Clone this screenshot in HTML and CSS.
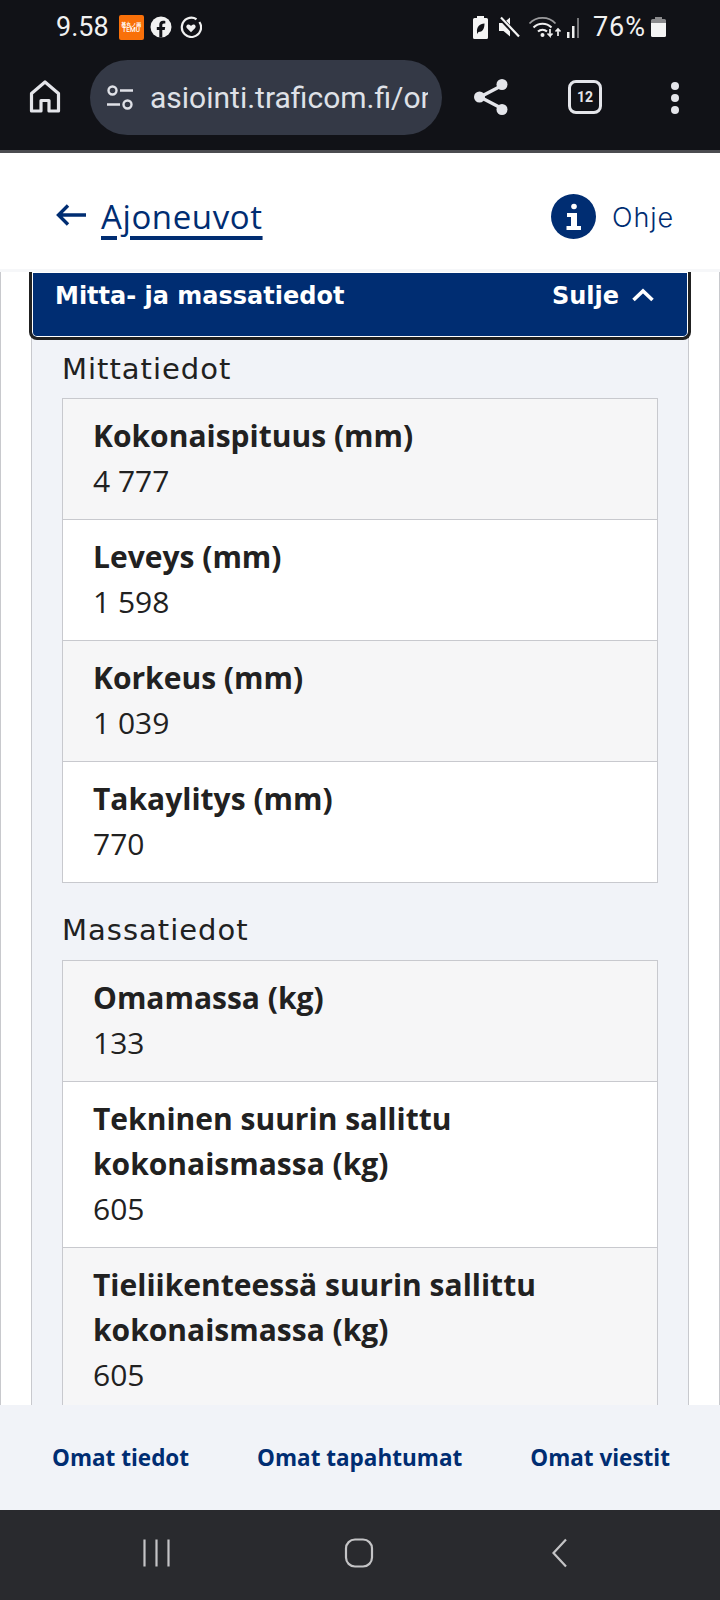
FILE: index.html
```html
<!DOCTYPE html>
<html lang="fi">
<head>
<meta charset="utf-8">
<title>Ajoneuvot</title>
<link rel="stylesheet" href="styles.css">
</head>
<body>
<div class="chrome">
  <div class="status">
    <div class="status-left">
      <span class="clock">9.58</span>
      <span class="temu"><span class="temu-top">基丸ノ画</span><span class="temu-name">TEMU</span></span>
      <svg class="ic21" viewBox="0 0 22 22"><circle cx="11" cy="11" r="10.5" fill="#f1f1f1"/><path d="M9.3 21.5v-7.6H6.8v-3h2.5V8.7c0-2.6 1.5-4 3.8-4 .8 0 1.6.1 2.2.2v2.6h-1.4c-1.2 0-1.6.8-1.6 1.6v1.8h2.9l-.5 3h-2.4v7.6z" fill="#111217"/></svg>
      <svg class="ic21" viewBox="0 0 22 22"><path d="M16.5 3.2A9.6 9.6 0 1 0 19.4 6" fill="none" stroke="#f1f1f1" stroke-width="2.2"/><path d="M11 16.2l-4-3.9c-2-2.2.9-5 3-3.2l1 .9 1-.9c2.100-1.800 5 1 3 3.200z" fill="#f1f1f1"/></svg>
    </div>
    <div class="status-right">
      <svg class="sr-batt" viewBox="0 0 15 23"><path d="M4 0h7v2h2.500q1.500 0 1.500 1.500v18q0 1.500-1.500 1.500h-12q-1.500 0-1.500-1.500v-18q0-1.500 1.500-1.500H4z" fill="#f4f4f4"/><path d="M4 16c-.5-5 2.500-8 7.500-8.500 0 5-2 8.500-6 8.500l-1.500 2z" fill="#111217"/></svg>
      <svg class="sr-mute" viewBox="0 0 22 22"><path d="M1 7h4.500L12 1.500v19L5.500 15H1z" fill="#f4f4f4"/><path d="M2 1.500l18 19" stroke="#111217" stroke-width="4.500"/><path d="M3 1.500l18 19" stroke="#f4f4f4" stroke-width="2.200"/></svg>
      <svg class="sr-wifi" viewBox="0 0 54 24"><path d="M1.500 8.500c7-7.500 19-7.500 26 0" fill="none" stroke="#9b9b9d" stroke-width="1.800"/><path d="M5.500 12.500c5-5 13-5 18 0M10 16.500c2.500-2.500 6.500-2.500 9 0" fill="none" stroke="#f0f0f0" stroke-width="2"/><circle cx="14.500" cy="20" r="2" fill="#f0f0f0"/><path d="M22 14v7l-2.500-2.500M22 21l2.500-2.500M30 21v-7M27.500 16.500l2.500-2.500 2.500 2.500" fill="none" stroke="#f0f0f0" stroke-width="1.700"/><rect x="39" y="17" width="2.500" height="6" fill="#f0f0f0"/><rect x="44" y="11" width="2.500" height="12" fill="#f0f0f0"/><rect x="49" y="3" width="2" height="20" fill="#77777a"/></svg>
      <span class="pct">76%</span>
      <svg class="sr-b2" viewBox="0 0 15 20"><path d="M4 0h7v2h2.500q1.500 0 1.500 1.500V7H0V3.500Q0 2 1.500 2H4z" fill="#8b8b8d"/><path d="M0 6h15v12.500q0 1.500-1.500 1.500h-12Q0 20 0 18.500z" fill="#f4f4f4"/></svg>
    </div>
  </div>
  <div class="toolbar">
    <svg class="home" viewBox="0 0 32 34"><path d="M16 3L2.500 14.500V32h9.500V21.500h8V32h9.500V14.500z" fill="none" stroke="#e4e5ea" stroke-width="3.200" stroke-linejoin="round"/></svg>
    <div class="url">
      <svg class="tune" viewBox="0 0 28 26"><circle cx="6.500" cy="5.500" r="4" fill="none" stroke="#dfe1e7" stroke-width="2.400"/><path d="M14 5.500h13M1 19.500h13" stroke="#dfe1e7" stroke-width="2.400"/><circle cx="21.500" cy="19.500" r="4" fill="none" stroke="#dfe1e7" stroke-width="2.400"/></svg>
      <span class="url-text">asiointi.traficom.fi/omat</span>
    </div>
    <svg class="share" viewBox="0 0 36 38"><path d="M29 7.500L7 19l22 11.500" fill="none" stroke="#e4e5ea" stroke-width="3.400"/><circle cx="29" cy="6.500" r="5.500" fill="#e4e5ea"/><circle cx="6.500" cy="19" r="5.500" fill="#e4e5ea"/><circle cx="29" cy="31.500" r="5.500" fill="#e4e5ea"/></svg>
    <span class="tabs">12</span>
    <span class="dots"><i></i><i></i><i></i></span>
  </div>
</div>
<header class="top">
  <a class="back" href="#">
    <svg class="arrow" viewBox="0 0 30 24"><path d="M12 2.500L2.500 12l9.500 9.500M3 12h27" fill="none" stroke="#002d72" stroke-width="3.400"/></svg>
    <span class="back-label">Ajoneuvot</span>
  </a>
  <a class="help" href="#">
    <svg class="info" viewBox="0 0 45 45"><circle cx="22.500" cy="22.500" r="22.500" fill="#002d72"/><circle cx="23" cy="12.500" r="2.800" fill="#fff"/><path d="M16 19h10v13h4v4H15.500v-4H20v-9h-4z" fill="#fff"/></svg>
    <span>Ohje</span>
  </a>
</header>
<main class="scroll">
  <div class="panel">
    <div class="accordion">
      <span>Mitta- ja massatiedot</span>
      <span class="close">Sulje
        <svg class="chev" viewBox="0 0 24 14"><path d="M2.500 12L12 3l9.500 9" fill="none" stroke="#fff" stroke-width="3.600"/></svg>
      </span>
    </div>
    <div class="panel-body">
      <h2 class="group first">Mittatiedot</h2>
      <dl class="table">
        <div class="row"><dt>Kokonaispituus (mm)</dt><dd>4 777</dd></div>
        <div class="row"><dt>Leveys (mm)</dt><dd>1 598</dd></div>
        <div class="row"><dt>Korkeus (mm)</dt><dd>1 039</dd></div>
        <div class="row"><dt>Takaylitys (mm)</dt><dd>770</dd></div>
      </dl>
      <h2 class="group">Massatiedot</h2>
      <dl class="table">
        <div class="row"><dt>Omamassa (kg)</dt><dd>133</dd></div>
        <div class="row"><dt>Tekninen suurin sallittu kokonaismassa (kg)</dt><dd>605</dd></div>
        <div class="row"><dt>Tieliikenteessä suurin sallittu kokonaismassa (kg)</dt><dd>605</dd></div>
      </dl>
    </div>
  </div>
</main>
<footer class="foot">
  <a href="#">Omat tiedot</a>
  <a href="#">Omat tapahtumat</a>
  <a href="#">Omat viestit</a>
</footer>
<nav class="sysnav">
  <svg class="nav-ic" viewBox="0 0 30 30"><path d="M2.500 1.500v27M14.500 1.500v27M26.500 1.500v27" stroke="#c4c4c6" stroke-width="2.200" fill="none"/></svg>
  <svg class="nav-ic" viewBox="0 0 30 30"><rect x="2" y="1.500" width="26" height="27" rx="9" fill="none" stroke="#c4c4c6" stroke-width="2.200"/></svg>
  <svg class="nav-ic" viewBox="0 0 30 30"><path d="M20 1.500L7.500 15 20 28.500" fill="none" stroke="#c4c4c6" stroke-width="2.200"/></svg>
</nav>
</body>
</html>
```
FILE: styles.css
```css
* { box-sizing: border-box; }
html, body { margin: 0; height: 1600px; overflow: hidden; }
body { display: flex; flex-direction: column; background: #fff; font-family: "Open Sans", sans-serif; color: #212121; }
a { text-decoration: none; }

.chrome { height: 153px; flex: none; background: #111217; border-bottom: 3px solid #4b4c50; }
.status { height: 52px; display: flex; justify-content: space-between; align-items: center; padding: 2px 54px 0 56px; color: #f1f1f1; }
.status-left, .status-right { display: flex; align-items: center; }
.clock { font: 400 27px "Roboto", sans-serif; margin-right: 10px; }
.temu { width: 25px; height: 25px; border-radius: 2px; background: #f97009; color: #fff; display: flex; flex-direction: column; align-items: center; justify-content: center; margin-right: 6px; }
.temu-top { font: 700 5px/7px "Noto Sans CJK SC", sans-serif; }
.temu-name { font: 500 6.500px/7px "Roboto", sans-serif; }
.ic21 { width: 22px; height: 22px; margin-right: 8px; }
.sr-batt { width: 15px; height: 23px; margin-right: 10px; }
.sr-mute { width: 22px; height: 22px; margin-right: 8px; }
.sr-wifi { width: 54px; height: 24px; }
.pct { font: 400 27px "Roboto", sans-serif; letter-spacing: 1px; margin: 0 5px 0 11px; }
.sr-b2 { width: 15px; height: 20px; }

.toolbar { height: 98px; display: flex; align-items: flex-start; padding: 8px 0 0 29px; }
.home { width: 32px; height: 34px; margin: 19px 0 0; flex: none; }
.url { width: 352px; height: 75px; border-radius: 38px; background: #343946; margin-left: 29px; display: flex; align-items: center; padding: 0 14px 0 16px; overflow: hidden; flex: none; }
.tune { width: 28px; height: 26px; flex: none; margin-right: 16px; }
.url-text { font: 400 30px "Roboto", sans-serif; color: #dfe1e7; white-space: nowrap; overflow: hidden; }
.share { width: 36px; height: 38px; margin: 18px 0 0 31px; flex: none; }
.tabs { width: 34px; height: 34px; border: 3px solid #e4e5ea; border-radius: 8px; margin: 20px 0 0 59px; color: #e4e5ea; font: 700 14px/28px "Roboto", sans-serif; text-align: center; flex: none; }
.dots { display: flex; flex-direction: column; gap: 4px; margin: 22px 0 0 69px; }
.dots i { display: block; width: 8px; height: 8px; border-radius: 50%; background: #e4e5ea; }

.top { height: 119px; flex: none; display: flex; justify-content: space-between; align-items: center; padding: 12px 46px 0 56px; background: #fff; border-bottom: 3px solid #f6f7f9; }
.back { display: flex; align-items: center; color: #002d72; }
.arrow { width: 30px; height: 24px; margin: -5px 15px 0 0; }
.back-label { font: 400 33px/44px "Open Sans", sans-serif; text-decoration: underline; text-decoration-thickness: 4px; text-underline-offset: 7px; letter-spacing: .6px; }
.help { display: flex; align-items: center; gap: 16px; color: #002d72; font: 300 27px "Inter", sans-serif; letter-spacing: .9px; }
.info { width: 45px; height: 45px; margin-top: -1px; }

.scroll { flex: 1; min-height: 0; overflow: hidden; border-left: 1px solid #c8c9cd; border-right: 1px solid #c8c9cd; }
.panel { margin: 0 30px; border: 1px solid #c8c9ce; border-top: 0; background: #f1f3f8; }
.accordion { height: 68px; margin: 0 -3px; padding: 0 33px 17px 23px; display: flex; justify-content: space-between; align-items: center; background: #002d72; color: #fff; font: 700 24px "DejaVu Sans", sans-serif; border: solid #212121; border-width: 0 3px 3px; border-radius: 0 0 8px 8px; box-shadow: inset 0 0 0 1px #fff; }
.close { display: flex; align-items: center; gap: 12px; }
.chev { width: 24px; height: 14px; margin-top: -3px; }
.panel-body { padding: 0 30px; }
.group { margin: 0; font: 400 29px/40px "DejaVu Sans", sans-serif; letter-spacing: 1px; padding: 27px 0 10px; }
.group.first { padding: 9px 0 9px; }
.table { margin: 0; border: 1px solid #c8c9ce; background: #fff; }
.row { padding: 14px 30px 16px; border-top: 1px solid #c8c9ce; }
.row:first-child { border-top: 0; }
.row:nth-child(odd) { background: #f6f6f7; }
.row dt { font: 700 30px/45px "Open Sans", sans-serif; }
.row dd { margin: 0; font: 400 30px/45px "Open Sans", sans-serif; }

.foot { height: 105px; flex: none; background: #f1f3f8; display: flex; justify-content: space-between; align-items: center; padding: 0 50px 0 52px; }
.foot a { color: #002d72; font: 700 22.500px "Open Sans", sans-serif; }
.sysnav { height: 90px; flex: none; background: #292a2e; display: flex; align-items: center; justify-content: space-between; padding: 0 144px 4px 142px; }
.nav-ic { width: 30px; height: 30px; }
```
